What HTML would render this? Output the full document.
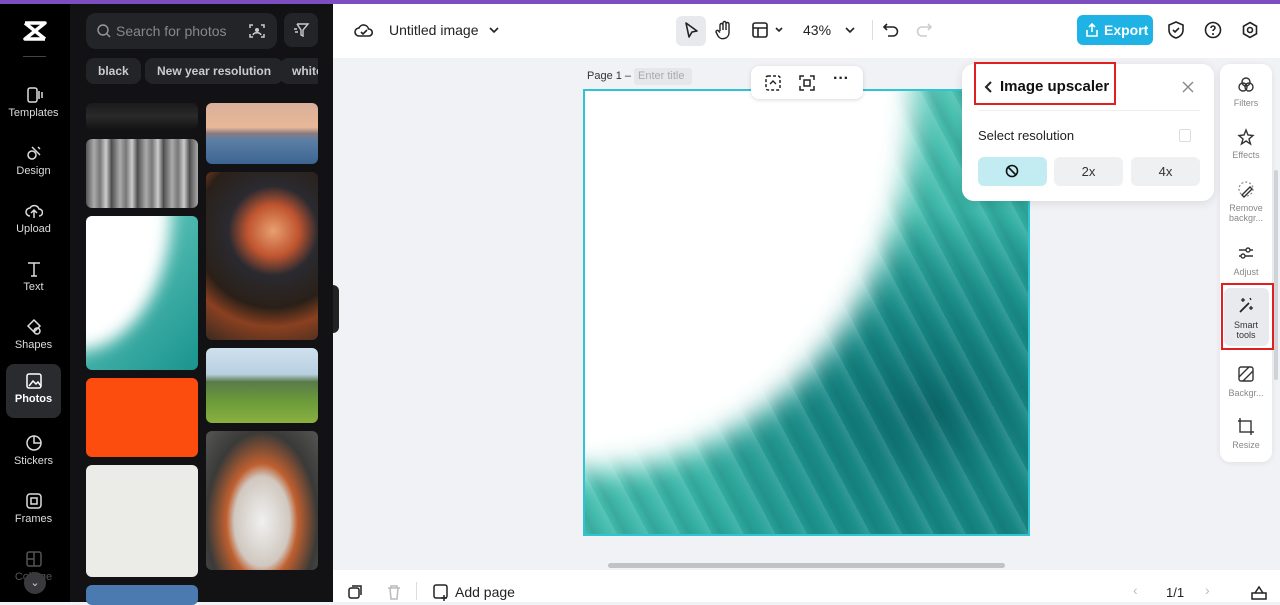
<!DOCTYPE html><html><head><style>
*{box-sizing:border-box;margin:0;padding:0}
body{width:1280px;height:602px;overflow:hidden;font-family:"Liberation Sans",sans-serif;background:#f1f2f5;position:relative}
.a{position:absolute}
.nav{left:0;top:0;width:70px;height:602px;background:#000}
.ni{position:absolute;left:6px;width:55px;height:54px;color:#ddd;font-size:11px;text-align:center}
.ni svg{display:block;margin:8px auto 3px}
.panel{left:70px;top:0;width:263px;height:602px;background:#121214}
.chip{position:absolute;top:58px;height:26px;border-radius:8px;background:#232427;color:#ccc;font-size:12px;font-weight:bold;line-height:26px;padding:0 12px}
.ph{position:absolute;border-radius:6px;overflow:hidden}
.rt{font-size:9px;color:#888;text-align:center;position:absolute;left:1221px;width:50px}
</style></head><body>
<div class="a" style="left:0;top:0;width:1280px;height:4px;background:#7b4fc0"></div>
<div class="a nav" style="top:4px;height:598px"></div>
<svg class="a" style="left:22px;top:20px" width="26" height="22" viewBox="0 0 26 22"><path d="M3 3h20L3 19h20M3 3l20 16" stroke="#fff" stroke-width="3.5" fill="none" stroke-linejoin="round"/></svg>
<div class="a" style="left:23px;top:56px;width:23px;height:1px;background:#444"></div>
<div class="ni" style="top:78px"><svg width="18" height="18"><rect x="3" y="2" width="9" height="14" rx="2" stroke="#ddd" fill="none" stroke-width="1.5"/><path d="M14 5v8M17 6v6" stroke="#ddd" stroke-width="1.5"/></svg>Templates</div>
<div class="ni" style="top:136px"><svg width="18" height="18"><circle cx="7" cy="11" r="4" stroke="#ddd" fill="none" stroke-width="1.5"/><path d="M7 3l8 8M13 3l2 2" stroke="#ddd" stroke-width="1.5"/></svg>Design</div>
<div class="ni" style="top:194px"><svg width="18" height="18"><path d="M5 14a4 4 0 010-8 5 5 0 019 1 3.5 3.5 0 010 7M9 16V9M6 11l3-3 3 3" stroke="#ddd" fill="none" stroke-width="1.5"/></svg>Upload</div>
<div class="ni" style="top:252px"><svg width="18" height="18"><path d="M3 3h12M9 3v13M6 16h6" stroke="#ddd" fill="none" stroke-width="1.5"/></svg>Text</div>
<div class="ni" style="top:310px"><svg width="18" height="18"><path d="M9 2l6 6-6 6-6-6z" stroke="#ddd" fill="none" stroke-width="1.5"/><circle cx="12" cy="13" r="3" stroke="#ddd" fill="none" stroke-width="1.5"/></svg>Shapes</div>
<div class="ni" style="top:364px;background:#2a2b2f;border-radius:8px;color:#fff;font-weight:bold"><svg width="18" height="18"><rect x="2" y="2" width="14" height="14" rx="2" stroke="#fff" fill="none" stroke-width="1.5"/><path d="M4 14l4-5 3 3 2-2 3 4" stroke="#fff" fill="none" stroke-width="1.5"/></svg>Photos</div>
<div class="ni" style="top:426px"><svg width="18" height="18"><circle cx="9" cy="9" r="7" stroke="#ddd" fill="none" stroke-width="1.5"/><path d="M9 2v7h7" stroke="#ddd" fill="none" stroke-width="1.5"/></svg>Stickers</div>
<div class="ni" style="top:484px"><svg width="18" height="18"><rect x="2" y="2" width="14" height="14" rx="3" stroke="#ddd" fill="none" stroke-width="1.5"/><rect x="6" y="6" width="6" height="6" stroke="#ddd" fill="none" stroke-width="1.5"/></svg>Frames</div>
<div class="ni" style="top:542px;color:#555"><svg width="18" height="18"><rect x="2" y="2" width="14" height="14" rx="2" stroke="#555" fill="none" stroke-width="1.5"/><path d="M9 2v14M2 9h7" stroke="#555" stroke-width="1.5"/></svg>Collage</div>
<div class="a" style="left:24px;top:572px;width:22px;height:22px;border-radius:50%;background:#3a3a3e;color:#ccc;font-size:11px;text-align:center;line-height:22px">⌄</div>
<div class="a panel" style="top:4px;height:598px"></div>
<div class="a" style="left:86px;top:13px;width:191px;height:36px;border-radius:10px;background:#232427;color:#888;font-size:14px;line-height:36px;padding-left:30px">Search for photos</div>
<svg class="a" style="left:96px;top:23px" width="16" height="16"><circle cx="7" cy="7" r="5" stroke="#999" fill="none" stroke-width="1.4"/><path d="M11 11l3 3" stroke="#999" stroke-width="1.4"/></svg>
<svg class="a" style="left:248px;top:22px" width="18" height="18"><path d="M2 6V3h3M13 3h3v3M16 12v3h-3M5 15H2v-3" stroke="#ccc" fill="none" stroke-width="1.5"/><circle cx="9" cy="8" r="2" fill="#ccc"/><path d="M5 13c1-3 7-3 8 0" stroke="#ccc" fill="none" stroke-width="1.5"/></svg>
<div class="a" style="left:284px;top:13px;width:34px;height:34px;border-radius:8px;background:#232427"></div>
<svg class="a" style="left:292px;top:21px" width="18" height="18"><path d="M5 3h11l-5 6v6l-2-1V9L5 3M2 8h3M3 11h3" stroke="#ccc" fill="none" stroke-width="1.4"/></svg>
<div class="chip" style="left:86px">black</div>
<div class="chip" style="left:145px">New year resolution</div>
<div class="chip" style="left:280px;width:38px;overflow:hidden;padding:0 0 0 12px;border-radius:8px 0 0 8px">white</div>
<div class="ph" style="left:86px;top:103px;width:112px;height:27px;background:linear-gradient(#1a1a1a,#2a2a2a,#111)"></div>
<div class="ph" style="left:86px;top:139px;width:112px;height:69px;background:repeating-linear-gradient(90deg,#555 0,#aaa 8px,#777 14px,#ccc 20px,#444 26px)"></div>
<div class="ph" style="left:86px;top:216px;width:112px;height:154px;background:linear-gradient(135deg,#6fd0c3,#1a948f)"><div class="a" style="left:-15px;top:-15px;width:100px;height:150px;background:#fff;border-radius:0 0 95px 0/0 0 140px 0;filter:blur(8px)"></div></div>
<div class="ph" style="left:86px;top:378px;width:112px;height:79px;background:#fc4d0e"></div>
<div class="ph" style="left:86px;top:465px;width:112px;height:112px;background:#ebebe8"></div>
<div class="ph" style="left:86px;top:585px;width:112px;height:20px;background:#4a7ab0"></div>
<div class="ph" style="left:206px;top:103px;width:112px;height:61px;background:linear-gradient(#d9b09a 0,#e8b898 40%,#8a7a80 50%,#5c7fa5 60%,#3d6592)"></div>
<div class="ph" style="left:206px;top:172px;width:112px;height:168px;background:radial-gradient(circle at 60% 35%,#e8a070 0,#c05530 20%,#2a2a30 35%,#2a2018 60%,#8a4020 75%,#3a2a20)"></div>
<div class="ph" style="left:206px;top:348px;width:112px;height:75px;background:linear-gradient(#cfe0ef 0,#b8cfe0 35%,#5a7a4a 45%,#6a9a3a 70%,#8ab040)"></div>
<div class="ph" style="left:206px;top:431px;width:112px;height:139px;background:radial-gradient(ellipse at 50% 65%,#f0f0f0 0,#d0c8c0 35%,#c06030 45%,#3a3a38 70%,#555)"></div>
<div class="a" style="left:333px;top:285px;width:6px;height:48px;background:#222;border-radius:0 6px 6px 0"></div>
<div class="a" style="left:333px;top:4px;width:947px;height:54px;background:#fff"></div>
<svg class="a" style="left:354px;top:21px" width="20" height="18"><path d="M5 15a4 4 0 010-8 5 5 0 019.5 1A3.5 3.5 0 0115 15z" stroke="#222" fill="none" stroke-width="1.6"/><path d="M7 11l2 2 4-4" stroke="#222" fill="none" stroke-width="1.6"/></svg>
<div class="a" style="left:389px;top:22px;font-size:14px;color:#222">Untitled image</div>
<svg class="a" style="left:488px;top:24px" width="12" height="12"><path d="M2 4l4 4 4-4" stroke="#222" fill="none" stroke-width="1.6"/></svg>
<div class="a" style="left:676px;top:16px;width:30px;height:30px;border-radius:6px;background:#e8e9ec"></div>
<svg class="a" style="left:682px;top:21px" width="18" height="20"><path d="M4 2l11 8-5 1-3 5z" stroke="#222" fill="none" stroke-width="1.6" stroke-linejoin="round"/></svg>
<svg class="a" style="left:714px;top:20px" width="20" height="20"><path d="M6 11V5a1.5 1.5 0 013 0v5V3a1.5 1.5 0 013 0v7V4a1.5 1.5 0 013 0v9a6 6 0 01-11 3l-2-4a1.4 1.4 0 012-1.5l2 2" stroke="#222" fill="none" stroke-width="1.4"/></svg>
<svg class="a" style="left:751px;top:21px" width="34" height="18"><rect x="2" y="2" width="14" height="14" rx="2" stroke="#222" fill="none" stroke-width="1.6"/><path d="M2 7h14M7 7v9M25 7l3 3 3-3" stroke="#222" fill="none" stroke-width="1.6"/></svg>
<div class="a" style="left:803px;top:22px;font-size:14px;color:#222">43%</div>
<svg class="a" style="left:844px;top:24px" width="12" height="12"><path d="M2 4l4 4 4-4" stroke="#222" fill="none" stroke-width="1.6"/></svg>
<div class="a" style="left:872px;top:20px;width:1px;height:20px;background:#ddd"></div>
<svg class="a" style="left:882px;top:21px" width="18" height="18"><path d="M5 3L2 6l3 3M2 6h9a4.5 4.5 0 010 9H6" stroke="#222" fill="none" stroke-width="1.6"/></svg>
<svg class="a" style="left:915px;top:21px" width="18" height="18"><path d="M13 3l3 3-3 3M16 6H7a4.5 4.5 0 000 9h5" stroke="#ccc" fill="none" stroke-width="1.6"/></svg>
<div class="a" style="left:1077px;top:15px;width:76px;height:30px;border-radius:6px;background:#1fb2e5;color:#fff;font-size:14px;font-weight:bold;line-height:30px;padding-left:27px">Export</div>
<svg class="a" style="left:1085px;top:22px" width="14" height="16"><path d="M7 10V2M4 5l3-3 3 3M2 8v6h10V8" stroke="#fff" fill="none" stroke-width="1.6"/></svg>
<svg class="a" style="left:1167px;top:20px" width="18" height="20"><path d="M9 2l7 3v5c0 4-3 7-7 8-4-1-7-4-7-8V5z" stroke="#222" fill="none" stroke-width="1.6"/><path d="M6 10l2 2 4-4" stroke="#222" fill="none" stroke-width="1.6"/></svg>
<svg class="a" style="left:1204px;top:21px" width="18" height="18"><circle cx="9" cy="9" r="7.5" stroke="#222" fill="none" stroke-width="1.6"/><path d="M7 7a2 2 0 114 0c0 1.5-2 1.5-2 3" stroke="#222" fill="none" stroke-width="1.6"/><circle cx="9" cy="13" r="1" fill="#222"/></svg>
<svg class="a" style="left:1241px;top:21px" width="18" height="18"><path d="M9 1.5l6.5 3.75v7.5L9 16.5l-6.5-3.75v-7.5z" stroke="#222" fill="none" stroke-width="1.6"/><circle cx="9" cy="9" r="2.5" stroke="#222" fill="none" stroke-width="1.6"/></svg>
<div class="a" style="left:587px;top:70px;font-size:11px;color:#333">Page 1 –</div>
<div class="a" style="left:634px;top:68px;width:58px;height:17px;background:#e6e7ea;border-radius:3px;font-size:11px;color:#aaa;padding:2px 4px">Enter title</div>
<div class="a" style="left:583px;top:89px;width:447px;height:447px;border:2px solid #2ec4d4;background:#fff;overflow:hidden">
<div class="a" style="left:0;top:0;width:443px;height:443px;background:radial-gradient(ellipse 55% 45% at 78% 72%,#0d6a6c 0,#168583 40%,rgba(38,170,158,0) 100%),linear-gradient(135deg,#7fd8cb 0,#48c0b0 45%,#24a39a 75%,#168582 100%)"></div>
<div class="a" style="left:0;top:0;width:443px;height:443px;background:repeating-linear-gradient(62deg,rgba(0,50,50,0) 0,rgba(0,50,50,.12) 8px,rgba(255,255,255,0) 18px,rgba(255,255,255,.12) 28px)"></div>
<div class="a" style="left:-40px;top:-40px;width:370px;height:420px;background:#fff;border-radius:0 0 330px 0/0 0 380px 0;filter:blur(14px)"></div>
</div>
<div class="a" style="left:751px;top:66px;width:112px;height:33px;background:#fff;border-radius:8px;box-shadow:0 1px 4px rgba(0,0,0,.15)"></div>
<svg class="a" style="left:764px;top:74px" width="18" height="18"><rect x="2" y="2" width="14" height="14" rx="2" stroke="#222" fill="none" stroke-width="1.5" stroke-dasharray="3 2"/><path d="M6 10l3-3 3 3" stroke="#222" fill="none" stroke-width="1.4"/></svg>
<svg class="a" style="left:798px;top:74px" width="18" height="18"><path d="M2 6V2h4M12 2h4v4M16 12v4h-4M6 16H2v-4" stroke="#222" fill="none" stroke-width="1.5"/><rect x="6" y="6" width="6" height="6" stroke="#222" fill="none" stroke-width="1.5"/></svg>
<div class="a" style="left:833px;top:70px;font-size:16px;font-weight:bold;color:#222">···</div>
<div class="a" style="left:962px;top:64px;width:252px;height:137px;background:#fff;border-radius:12px;box-shadow:0 2px 10px rgba(0,0,0,.1)"></div>
<div class="a" style="left:974px;top:62px;width:142px;height:43px;border:2px solid #e02020"></div>
<svg class="a" style="left:984px;top:80px" width="10" height="14"><path d="M7 2L2 7l5 5" stroke="#222" fill="none" stroke-width="2"/></svg>
<div class="a" style="left:1000px;top:78px;font-size:15px;font-weight:bold;color:#111">Image upscaler</div>
<svg class="a" style="left:1181px;top:80px" width="14" height="14"><path d="M2 2l10 10M12 2L2 12" stroke="#888" stroke-width="1.4"/></svg>
<div class="a" style="left:978px;top:110px;width:222px;height:1px;background:#eee"></div>
<div class="a" style="left:978px;top:128px;font-size:13px;color:#222">Select resolution</div>
<div class="a" style="left:1179px;top:129px;width:12px;height:13px;border:1px solid #ddd;border-radius:2px"></div>
<div class="a" style="left:978px;top:157px;width:69px;height:29px;border-radius:6px;background:#c2ecf2"></div>
<svg class="a" style="left:1005px;top:164px" width="14" height="14"><circle cx="7" cy="7" r="5.5" stroke="#111" fill="none" stroke-width="1.6"/><path d="M3 3l8 8" stroke="#111" stroke-width="1.6"/></svg>
<div class="a" style="left:1054px;top:157px;width:69px;height:29px;border-radius:6px;background:#eef0f2;font-size:13px;text-align:center;line-height:29px;color:#333">2x</div>
<div class="a" style="left:1131px;top:157px;width:69px;height:29px;border-radius:6px;background:#eef0f2;font-size:13px;text-align:center;line-height:29px;color:#333">4x</div>
<div class="a" style="left:1220px;top:64px;width:52px;height:398px;background:#fff;border-radius:10px;box-shadow:0 1px 6px rgba(0,0,0,.08)"></div>
<div class="a" style="left:1274px;top:170px;width:4px;height:210px;background:#cfd2d6;border-radius:2px"></div>
<svg class="a" style="left:1237px;top:76px" width="18" height="18"><circle cx="9" cy="6" r="4" stroke="#333" fill="none" stroke-width="1.4"/><circle cx="6" cy="11" r="4" stroke="#333" fill="none" stroke-width="1.4"/><circle cx="12" cy="11" r="4" stroke="#333" fill="none" stroke-width="1.4"/></svg>
<div class="rt" style="top:98px">Filters</div>
<svg class="a" style="left:1237px;top:128px" width="18" height="18"><path d="M9 2l2 5 5 .5-4 3.5 1.5 5L9 13l-4.5 3 1.5-5-4-3.5 5-.5z" stroke="#333" fill="none" stroke-width="1.4"/></svg>
<div class="rt" style="top:150px">Effects</div>
<svg class="a" style="left:1237px;top:180px" width="18" height="18"><circle cx="9" cy="9" r="7" stroke="#888" fill="none" stroke-width="1.2" stroke-dasharray="2 2"/><path d="M5 15l8-8 2 2-8 8z" stroke="#333" fill="#fff" stroke-width="1.4"/></svg>
<div class="rt" style="top:203px;line-height:10px">Remove<br>backgr...</div>
<svg class="a" style="left:1237px;top:244px" width="18" height="18"><path d="M2 6h14M2 12h14" stroke="#333" stroke-width="1.4"/><circle cx="11" cy="6" r="2" fill="#fff" stroke="#333" stroke-width="1.4"/><circle cx="6" cy="12" r="2" fill="#fff" stroke="#333" stroke-width="1.4"/></svg>
<div class="rt" style="top:267px">Adjust</div>
<div class="a" style="left:1224px;top:288px;width:45px;height:58px;background:#e8eaed;border-radius:6px"></div>
<div class="a" style="left:1221px;top:283px;width:53px;height:67px;border:2px solid #e02020"></div>
<svg class="a" style="left:1237px;top:296px" width="18" height="18"><path d="M3 16L12 7" stroke="#222" stroke-width="1.8"/><path d="M6 2v4M4 4h4M14 10v4M12 12h4M13 2l1 2" stroke="#222" stroke-width="1.3"/></svg>
<div class="rt" style="top:320px;color:#333;line-height:10px">Smart<br>tools</div>
<svg class="a" style="left:1237px;top:365px" width="18" height="18"><rect x="2" y="2" width="14" height="14" rx="2" stroke="#333" fill="none" stroke-width="1.4"/><path d="M2 12l10-10M6 16l10-10" stroke="#333" stroke-width="1.4"/></svg>
<div class="rt" style="top:388px">Backgr...</div>
<svg class="a" style="left:1237px;top:417px" width="18" height="18"><rect x="3" y="4" width="11" height="11" stroke="#333" fill="none" stroke-width="1.4"/><path d="M3 1v3M1 4h3M14 15v3M14 15h3" stroke="#333" stroke-width="1.4"/></svg>
<div class="rt" style="top:440px">Resize</div>
<div class="a" style="left:608px;top:563px;width:397px;height:5px;background:#bfc2c6;border-radius:3px"></div>
<div class="a" style="left:333px;top:570px;width:947px;height:32px;background:#fff"></div>
<svg class="a" style="left:347px;top:584px" width="16" height="16"><rect x="2" y="4" width="10" height="10" rx="2" stroke="#222" fill="none" stroke-width="1.5"/><path d="M5 2h9v9" stroke="#222" fill="none" stroke-width="1.5"/></svg>
<svg class="a" style="left:386px;top:584px" width="16" height="16"><path d="M2 4h12M5 4V2h6v2M4 4l1 11h6l1-11" stroke="#bbb" fill="none" stroke-width="1.5"/></svg>
<div class="a" style="left:416px;top:582px;width:1px;height:18px;background:#ddd"></div>
<svg class="a" style="left:432px;top:583px" width="18" height="18"><rect x="2" y="2" width="13" height="13" rx="2" stroke="#222" fill="none" stroke-width="1.5"/><path d="M12 12v6M9 15h6" stroke="#222" stroke-width="1.5"/></svg>
<div class="a" style="left:455px;top:584px;font-size:14px;color:#222">Add page</div>
<div class="a" style="left:1133px;top:582px;font-size:14px;color:#bbb">‹</div>
<div class="a" style="left:1166px;top:585px;font-size:13px;color:#222">1/1</div>
<div class="a" style="left:1205px;top:582px;font-size:14px;color:#bbb">›</div>
<svg class="a" style="left:1250px;top:583px" width="18" height="18"><path d="M2 10h14v6H2zM5 10l4-6 4 6" stroke="#222" fill="none" stroke-width="1.5"/></svg>
</body></html>
